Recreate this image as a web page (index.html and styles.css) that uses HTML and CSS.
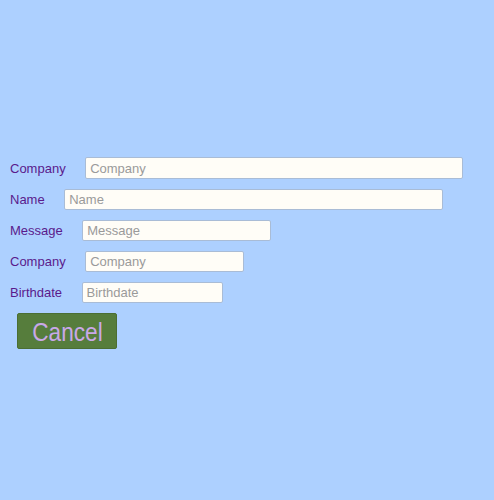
FILE: index.html
```html
<!DOCTYPE html>
<html>
<head>
<meta charset="utf-8">
<link rel="stylesheet" href="styles.css">
</head>
<body>
<form class="form">
  <div class="row tall"><label class="lbl">Company</label><input class="field w1" placeholder="Company"></div>
  <div class="row"><label class="lbl">Name</label><input class="field w2" placeholder="Name"></div>
  <div class="row"><label class="lbl">Message</label><input class="field w3" placeholder="Message"></div>
  <div class="row"><label class="lbl">Company</label><input class="field w4" placeholder="Company"></div>
  <div class="row"><label class="lbl">Birthdate</label><input class="field w5" placeholder="Birthdate"></div>
  <div class="actions"><button type="button" class="btn"><span class="btn-text">Cancel</span></button></div>
</form>
</body>
</html>
```
FILE: styles.css
```css
html, body {
  margin: 0;
  padding: 0;
  background: #add0ff;
  width: 494px;
  height: 500px;
  font-family: "Liberation Sans", Arial, sans-serif;
}
.form {
  padding: 157px 0 0 10px;
  display: flex;
  flex-direction: column;
  gap: 10px;
}
.row {
  display: flex;
  align-items: center;
  height: 21px;
}
.row.tall { height: 22px; }
.lbl {
  font-size: 13px;
  color: #5a1a8c;
  margin-right: 19.5px;
}
.field {
  box-sizing: border-box;
  height: 21px;
  margin: 0;
  padding: 0 4px;
  border: 1px solid #a9bcd6;
  border-radius: 2px;
  background: #fffdf7;
  font-family: "Liberation Sans", Arial, sans-serif;
  font-size: 13px;
  color: #333;
  outline: none;
}
.row.tall .field { height: 22px; }
.field::placeholder { color: #9a9a9a; }
.w1 { width: 378px; }
.w2 { width: 379px; }
.w3 { width: 189px; }
.w4 { width: 159px; }
.w5 { width: 141px; }
.actions { display: flex; padding-left: 7px; }
.btn {
  box-sizing: border-box;
  width: 100px;
  height: 36px;
  background: #567d3c;
  color: #c9a8e8;
  border: 1px solid #4b6e33;
  border-radius: 2px;
  font-family: "Liberation Sans", Arial, sans-serif;
  font-size: 26px;
  padding: 3px 0 0;
  display: flex;
  align-items: center;
  justify-content: center;
}
.btn-text {
  display: inline-block;
  transform: scaleX(0.87);
}
```
